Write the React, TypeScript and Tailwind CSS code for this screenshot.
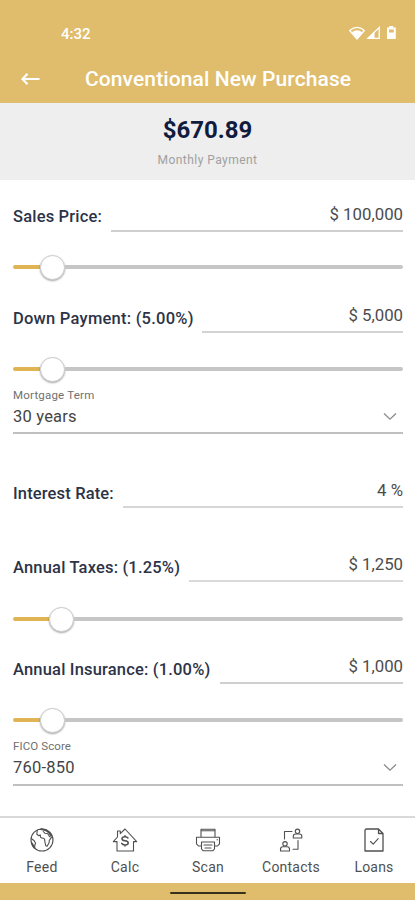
import React from "react";

const stroke = { fill: "none", stroke: "#505050", strokeWidth: 1.1, strokeLinejoin: "round" as const, strokeLinecap: "round" as const };

function Field({ label, value, height, labelSpacing, line }: { label: string; value: string; height: string; labelSpacing: string; line: string }) {
  return (
    <div className={`flex items-end ${height}`}>
      <label className={`shrink-0 whitespace-nowrap text-[16.5px] font-medium leading-[20px] text-[#2c3347] ${labelSpacing}`}>{label}</label>
      <div className={`ml-auto border-b-2 pb-[6px] text-right text-[16.8px] leading-[20px] text-[#4c4c4c] ${line}`}>
        {value}
      </div>
    </div>
  );
}

function Slider({ margin, fill }: { margin: string; fill: string }) {
  return (
    <div className={`flex h-[26px] items-center ${margin}`}>
      <div className={`h-[4px] rounded-l-full bg-[#e0b452] ${fill}`} />
      <div className="h-[25px] w-[25px] shrink-0 rounded-full border border-[#ccc] bg-white shadow-[0_1px_2px_rgba(0,0,0,0.35)]" />
      <div className="h-[4px] flex-1 rounded-r-full bg-[#c6c6c6]" />
    </div>
  );
}

function Select({ label, value, height, labelSpacing, bottom }: { label: string; value: string; height: string; labelSpacing: string; bottom: string }) {
  return (
    <div className={`flex items-end justify-between border-b-2 border-[#bfbfbf] ${height} ${bottom}`}>
      <div>
        <div className={`text-[11.5px] leading-[16px] text-[#707070] ${labelSpacing}`}>{label}</div>
        <div className="mt-[4px] text-[16.5px] leading-[20px] tracking-[0.2px] text-[#444]">{value}</div>
      </div>
      <svg className="mr-[6px] mb-[6px]" width="14" height="9" viewBox="0 0 14 9">
        <path d="M1 1.5 7 7.2 13 1.5" fill="none" stroke="#8b8b8b" strokeWidth="1.3" />
      </svg>
    </div>
  );
}

const tabs = [
  {
    name: "Feed", spacing: "tracking-[0.3px]",
    icon: (
      <g>
        <circle cx="13" cy="13" r="11" />
        <path d="M8.3 3.4 7.8 7l1.6 1.6 2-.6M11.4 8c-.4 2 .4 3.3 2.8 3.3 1.8.2 1.6 1.7 1.6 3.2l1 4.3 1.3.5 2-3.5.2-2.5 2.5-3.3-2.2-.2-1.8-3-3-.6-1.5-1.7M2.3 11.5l2.9 2.2 1.4 2.6-.9 2.2.2 2.8" />
        <path d="M12 2.1 17 3.2l3 2.2 2 3.1M3 16.5l2 3.7" strokeWidth="1.9" />
      </g>
    ),
  },
  {
    name: "Calc", spacing: "tracking-[0.3px]",
    icon: (
      <g>
        <path d="M1.3 14.6 5.5 10V4h2.8v2.7L13 2l11.7 12.6H21.5V24H5v-9.4z" />
        <path d="M16 11c-.6-.9-1.6-1.2-3-1.2-1.8 0-3 .7-3 2s1 1.8 3 2c2.2.2 3.2.8 3.2 2.1 0 1.4-1.4 2-3.2 2-1.5 0-2.7-.5-3.3-1.5M13 8.8v1M13 18v1.1" strokeWidth="1.5" />
      </g>
    ),
  },
  {
    name: "Scan", spacing: "tracking-[0.2px]",
    icon: (
      <g>
        <path d="M6 10V2.2h14V10M6 3.7h14M6.5 19H3.5L1.5 16.8V10.3h23v6.5l-2 2.2h-3M6.5 15h13v7L18 23.7H8L6.5 22zM9 18h8M10 21h6M22 12.8h.5" />
      </g>
    ),
  },
  {
    name: "Contacts", spacing: "tracking-[0.2px]",
    icon: (
      <g>
        <circle cx="19.5" cy="4.3" r="2.2" />
        <path d="M15.3 11V9.2q0-2.2 2.2-2.2h4q2.3 0 2.3 2.2V11zM6.5 12V4.5H14" />
        <circle cx="7" cy="16.8" r="2.2" />
        <path d="M2.5 24v-1.8q0-2.5 2.3-2.5h4.4q2.3 0 2.3 2.5V24zM20 13.5v8.7h-5" />
      </g>
    ),
  },
  {
    name: "Loans", spacing: "tracking-[0.2px]",
    icon: (
      <g>
        <path d="M5.5 2h12l4.5 4.5V24H4V3.5Q4 2 5.5 2zM17.5 2v4.5H22" strokeWidth="1.3" />
        <path d="m9.5 14.5 2.7 2.7 5-5.5" />
      </g>
    ),
  },
];

export default function App() {
  return (
    <div className="flex h-[900px] w-[415px] flex-col overflow-hidden bg-white font-['Roboto',sans-serif]">
      <header className="h-[103px] bg-[#dfbd6c] text-white">
        <div className="flex h-[54px] items-end justify-between pl-[61px] pr-[18px] pb-[10px]">
          <span className="text-[15px] font-medium leading-[20px]">4:32</span>
          <svg className="mb-[3px]" width="49" height="16" viewBox="0 0 49 16" fill="none" stroke="white">
            <path d="M1.7 5.5Q9-.6 16.3 5.5L9 14z" strokeWidth="1.3" strokeLinejoin="round" />
            <path d="M3.8 7.3Q9 3.3 14.2 7.3L9 13.5z" fill="white" stroke="none" />
            <path d="M20 13.3 31.2 2.5v10.8z" strokeWidth="1.3" />
            <path d="m19 13.8 7.5-7.3v7.3z" fill="white" stroke="none" />
            <path d="M39 2.5h2.3V1h4v1.5h2.5V14H39z" fill="white" stroke="none" />
            <path d="M41 4.5h4.8v3H41z" fill="#dfbd6c" stroke="none" />
          </svg>
        </div>
        <div className="flex h-[49px] items-center pl-[21px]">
          <svg width="20" height="14" viewBox="0 0 20 14" fill="none" stroke="white" strokeWidth="2.2">
            <path d="M6.5 1.8 1.5 7l5 5.2M1.5 7h17" />
          </svg>
          <h1 className="ml-[44px] whitespace-nowrap text-[21px] font-medium leading-[26px] tracking-[0.1px]">Conventional New Purchase</h1>
        </div>
      </header>
      <section className="flex h-[77px] flex-col items-center bg-[#eee]">
        <div className="mt-[12px] text-[24px] font-bold leading-[30px] text-[#111b3d]">$670.89</div>
        <div className="mt-[7px] text-[12px] leading-[16px] tracking-[0.45px] text-[#a0a0a0]">Monthly Payment</div>
      </section>
      <main className="flex-1 pl-[13px] pr-[12px]">
        <Field label="Sales Price:" value="$ 100,000" height="h-[52px]" labelSpacing="pb-[5px] tracking-[0.18px]" line="w-[292px] border-[#cfcfcf]" />
        <Slider margin="mt-[22px]" fill="w-[27px]" />
        <Field label="Down Payment: (5.00%)" value="$ 5,000" height="h-[53px]" labelSpacing="pb-[4px] tracking-[0.24px]" line="w-[201px] border-[#d3d3d3]" />
        <Slider margin="mt-[23px]" fill="w-[27px]" />
        <Select label="Mortgage Term" value="30 years" height="h-[52px]" labelSpacing="tracking-[0.2px]" bottom="pb-[5px]" />
        <Field label="Interest Rate:" value="4 %" height="h-[74px]" labelSpacing="pb-[4px] tracking-[0.15px]" line="w-[280px] border-[#d6d6d6]" />
        <Field label="Annual Taxes: (1.25%)" value="$ 1,250" height="h-[74px]" labelSpacing="pb-[4px] tracking-[0.18px]" line="w-[214px] border-[#dadada]" />
        <Slider margin="mt-[24px]" fill="w-[36px]" />
        <Field label="Annual Insurance: (1.00%)" value="$ 1,000" height="h-[52px]" labelSpacing="pb-[4px] tracking-[0.18px]" line="w-[183px] border-[#cfcfcf]" />
        <Slider margin="mt-[23px]" fill="w-[27px]" />
        <Select label="FICO Score" value="760-850" height="h-[53px]" labelSpacing="tracking-[0.1px]" bottom="pb-[6px]" />
      </main>
      <nav className="grid h-[67px] grid-cols-5 border-t-2 border-[#d9d9d9] bg-white">
        {tabs.map((tab) => (
          <div key={tab.name} className="flex flex-col items-center pt-[9px] pl-px">
            <svg width="26" height="26" viewBox="0 0 26 26" {...stroke}>{tab.icon}</svg>
            <span className={`mt-[5px] text-[14px] leading-[18px] text-[#505050] ${tab.spacing}`}>{tab.name}</span>
          </div>
        ))}
      </nav>
      <footer className="flex h-[17px] items-center justify-center bg-[#dfbd6c]">
        <div className="mt-[2px] h-[2px] w-[76px] rounded-full bg-[#39301c]" />
      </footer>
    </div>
  );
}
